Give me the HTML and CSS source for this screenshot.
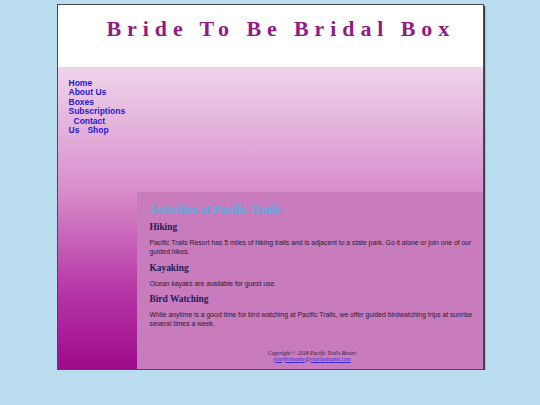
FILE: index.html
```html
<!DOCTYPE html>
<html>
<head>
<meta charset="utf-8">
<title>Bride To Be Bridal Box</title>
<link rel="stylesheet" href="styles.css">
</head>
<body>
<div class="wrapper">
  <header class="header">
    <h1 class="title">Bride To Be Bridal Box</h1>
  </header>
  <div class="body">
    <nav class="nav">
      <a href="#">Home</a>
      <a href="#">About Us</a>
      <a href="#">Boxes</a>
      <a href="#">Subscriptions</a>
      <a href="#" class="indent">Contact</a>
      <span class="row"><a href="#" class="inline">Us</a><a href="#" class="inline shop">Shop</a></span>
    </nav>
    <main class="main">
      <h2 class="heading">Activities at Pacific Trails</h2>
      <h3 class="sub">Hiking</h3>
      <p class="text">Pacific Trails Resort has 5 miles of hiking trails and is adjacent to a state park. Go it alone or join one of our guided hikes.</p>
      <h3 class="sub">Kayaking</h3>
      <p class="text">Ocean kayaks are available for guest use.</p>
      <h3 class="sub">Bird Watching</h3>
      <p class="text">While anytime is a good time for bird watching at Pacific Trails, we offer guided birdwatching trips at sunrise several times a week.</p>
      <footer class="footer">
        <div>Copyright &copy; 2018 Pacific Trails Resort</div>
        <a href="#" class="mail">yourfirstname@yourlastname.com</a>
      </footer>
    </main>
  </div>
</div>
</body>
</html>
```
FILE: styles.css
```css
html, body {
  margin: 0;
  padding: 0;
}
body {
  background: #b9dcef;
  padding-top: 4px;
  font-family: "Liberation Sans", Arial, sans-serif;
}
.wrapper {
  width: 425px;
  height: 364px;
  margin: 0 auto;
  border: 1px solid #4a4a55;
  box-shadow: 1px 2px 1px #3a3a48;
  display: flex;
  flex-direction: column;
  background: #fff;
}
.header {
  height: 62px;
  background: #fff;
  flex: none;
}
.title {
  margin: 0;
  padding: 12px 0 0 49px;
  font-family: "Liberation Serif", "Times New Roman", serif;
  font-weight: bold;
  font-size: 22px;
  letter-spacing: 5.9px;
  color: #931a84;
  line-height: 24px;
  white-space: nowrap;
}
.body {
  flex: 1;
  display: flex;
  flex-direction: column;
  background: linear-gradient(to bottom, #efd4eb 0%, #d98fcc 40%, #b534a5 75%, #9e0a8c 100%);
}
.nav {
  padding: 12px 0 0 11px;
  height: 113px;
  display: flex;
  flex-direction: column;
  font-size: 8.5px;
  line-height: 9.4px;
  font-weight: bold;
}
.nav a {
  color: #2419d6;
  text-decoration: none;
}
.nav .indent {
  padding-left: 5px;
}
.nav .shop {
  padding-left: 8px;
}
.main {
  flex: 1;
  margin-left: 79px;
  background: #c87cbd;
  padding: 10px 8px 0 13px;
  display: flex;
  flex-direction: column;
}
.heading {
  margin: 0 0 6px;
  font-family: "Liberation Serif", "Times New Roman", serif;
  font-size: 12px;
  line-height: 14px;
  color: #5aa2d8;
  text-shadow: 0 0 1px #8fb7e0;
}
.sub {
  margin: 0 0 5px;
  font-family: "Liberation Serif", "Times New Roman", serif;
  font-size: 9.4px;
  line-height: 11px;
  color: #221a55;
}
.text {
  margin: 0 0 6.5px;
  font-size: 6.8px;
  line-height: 9px;
  color: #2a1a30;
}
.footer {
  margin-top: 15px;
  text-align: center;
  font-family: "Liberation Serif", "Times New Roman", serif;
  font-style: italic;
  font-size: 5.6px;
  line-height: 6px;
  color: #2a1a40;
}
.mail {
  color: #3a2ae0;
}
```
